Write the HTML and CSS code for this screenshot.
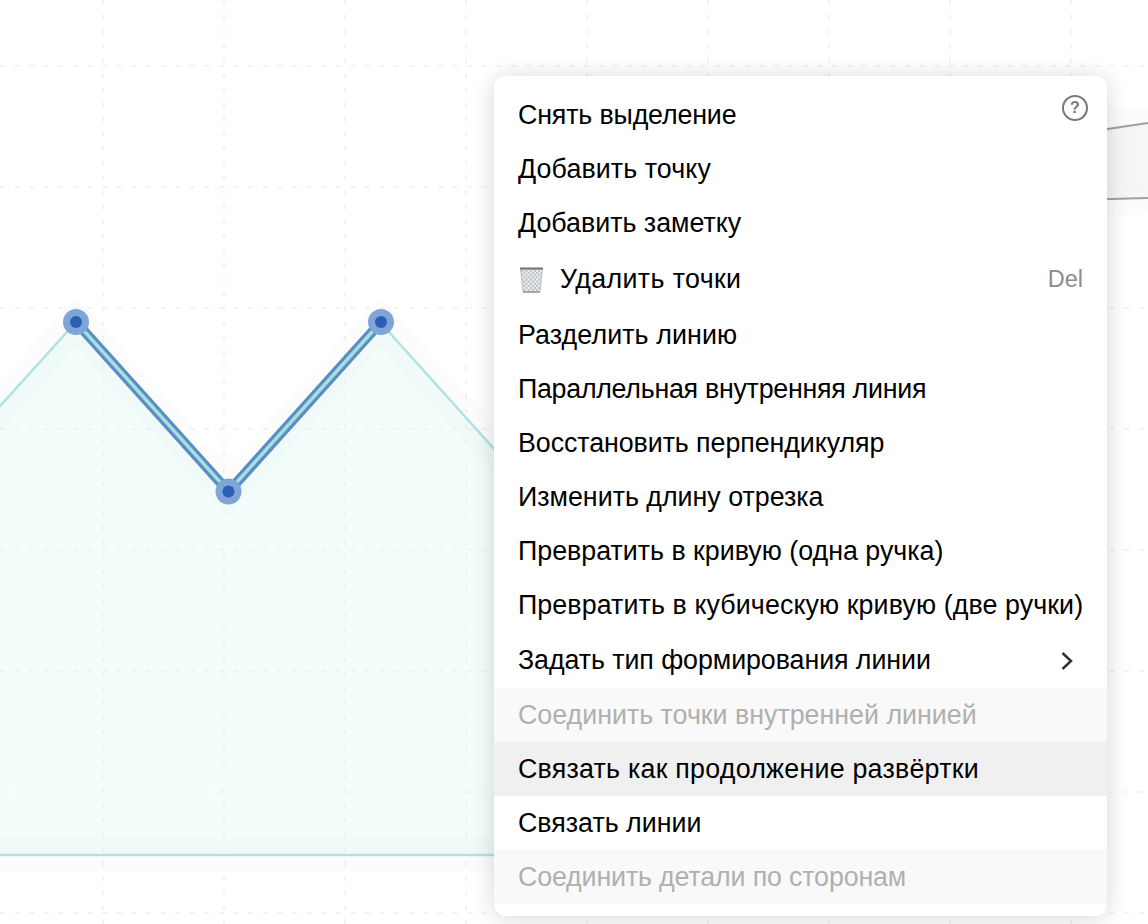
FILE: index.html
```html
<!DOCTYPE html>
<html>
  <head>
    <meta charset="utf-8" />
    <title>Редактор лекал</title>
    <link rel="stylesheet" href="styles.css">
  </head>

  <body>
    <section class="canvas">
      <svg class="drawing" width="1148" height="924" viewBox="0 0 1148 924">
        <defs>
          <pattern id="mesh" width="3" height="3" patternUnits="userSpaceOnUse" patternTransform="rotate(45)">
            <rect width="3" height="3" fill="#eef0f1" />
            <path d="M0 0H3M0 0V3" stroke="#9da2a6" stroke-width="1" />
          </pattern>
        </defs>

        <!-- neighbour piece, right side -->
        <path class="piece-halo" d="M950 122L1148 106V214L950 222Z" />
        <path class="piece-fill" d="M950 152L1148 123V198L950 206Z" />
        <path class="piece-line" d="M1000 145L1148 123M1000 202L1148 198" />

        <!-- main piece -->
        <path class="shape-fill" d="M-100 517L76 322L228 491L380 322L620 589V855H-100Z" />

        <!-- grid -->
        <path class="grid" d="M103 0V924M224 0V924M345 0V924M466 0V924M587 0V924M708 0V924M829 0V924M950 0V924M1071 0V924" />
        <path class="grid" d="M0 66H1148M0 187H1148M0 308H1148M0 429H1148M0 550H1148M0 671H1148M0 792H1148M0 913H1148" />

        <path class="shape-halo" d="M-100 517L76 322L228 491L380 322L620 589V855H-100" />
        <path class="shape-line" d="M-100 517L76 322L228 491L380 322L620 589V855H-100" />

        <!-- selected segments -->
        <path class="selected-outer" d="M76 322L228.500 491.500L381 322" />
        <path class="selected-inner" d="M76 322L228.500 491.500L381 322" />

        <g class="point"><circle class="point-ring" cx="76" cy="322" r="13" /><circle class="point-dot" cx="76" cy="322" r="6" /></g>
        <g class="point"><circle class="point-ring" cx="228.500" cy="491.500" r="13" /><circle class="point-dot" cx="228.500" cy="491.500" r="6" /></g>
        <g class="point"><circle class="point-ring" cx="381" cy="322" r="13" /><circle class="point-dot" cx="381" cy="322" r="6" /></g>
      </svg>

      <nav class="menu">
        <span class="help"><span class="help-mark">?</span></span>
        <div class="row snug">Снять выделение</div>
        <div class="row nudge">Добавить точку</div>
        <div class="row">Добавить заметку</div>
        <div class="row row-icon">
          <svg class="trash" width="27" height="28" viewBox="0 0 27 28">
            <path d="M2.500 2.500H24.500L22 26.500H5Z" fill="url(#mesh)" stroke="#b4b8bb" stroke-width="0.800" />
            <path d="M5 25H22L21.800 27H5.200Z" fill="#a6aaae" />
            <path d="M2 2.500H25" stroke="#6d7277" stroke-width="2" />
          </svg>
          <span class="label wide">Удалить точки</span>
          <span class="shortcut">Del</span>
        </div>
        <div class="row nudge">Разделить линию</div>
        <div class="row tight">Параллельная внутренняя линия</div>
        <div class="row fine">Восстановить перпендикуляр</div>
        <div class="row">Изменить длину отрезка</div>
        <div class="row">Превратить в кривую (одна ручка)</div>
        <div class="row nudge">Превратить в кубическую кривую (две ручки)</div>
        <div class="row row-sub fine">
          <span class="label">Задать тип формирования линии</span>
          <svg class="chevron" width="14" height="20" viewBox="0 0 14 20">
            <path d="M2.500 2L11 10L2.500 18" fill="none" stroke="#333" stroke-width="2.500" />
          </svg>
        </div>
        <div class="row disabled">Соединить точки внутренней линией</div>
        <div class="row active loose">Связать как продолжение развёртки</div>
        <div class="row">Связать линии</div>
        <div class="row disabled snug">Соединить детали по сторонам</div>
      </nav>
    </section>
  </body>
</html>
```

FILE: styles.css
```css
/* ------------------------------ reset ------------------------------ */
* {
  margin: 0;
  padding: 0;
  box-sizing: border-box;
}

body {
  background: #fff;
  overflow: hidden;
  font-family: "Liberation Sans", Arial, sans-serif;
}

/* ------------------------------ canvas ------------------------------ */
.canvas {
  position: relative;
  width: 1148px;
  height: 924px;
  overflow: hidden;
}

.drawing {
  position: absolute;
  left: 0;
  top: 0;
}

.grid {
  fill: none;
  stroke: #f0f0f0;
  stroke-width: 1.5;
  stroke-dasharray: 5 9.6;
}

.shape-fill {
  fill: #f3fdfc;
  stroke: none;
}

.shape-halo {
  fill: none;
  stroke: rgba(0, 0, 0, 0.012);
  stroke-width: 34;
}

.shape-line {
  fill: none;
  stroke: #aee3e1;
  stroke-width: 2.5;
}

.selected-outer {
  fill: none;
  stroke: #5a8cc6;
  stroke-width: 10;
}

.selected-inner {
  fill: none;
  stroke: #a8dedd;
  stroke-width: 3.5;
}

.point-ring {
  fill: #7fa4d8;
}

.point-dot {
  fill: #2a5fb5;
}

.piece-fill {
  fill: #f6f6f5;
}

.piece-halo {
  fill: #fcfcfc;
}

.piece-line {
  fill: none;
  stroke: #a0a0a0;
  stroke-width: 2;
}

/* ------------------------------ menu ------------------------------ */
.menu {
  position: absolute;
  left: 494px;
  top: 76px;
  width: 613px;
  height: 840px;
  padding: 12px 0;
  border-radius: 12px;
  background: rgba(255, 255, 255, 0.99);
  box-shadow: 0 2px 24px rgba(0, 0, 0, 0.16);
  color: #000;
  font-size: 26.8px;
}

.row {
  display: flex;
  align-items: center;
  height: 54px;
  padding: 1px 24px 0;
  white-space: nowrap;
}

.row-icon {
  height: 58px;
}

.row-sub {
  height: 56px;
}

.label {
  flex: 1;
}

/* Helvetica and Liberation differ a little per word, these even it out */
.tight {
  letter-spacing: -0.27px;
}

.snug {
  letter-spacing: -0.15px;
}

.fine {
  letter-spacing: -0.07px;
}

.nudge {
  letter-spacing: 0.1px;
}

.loose {
  letter-spacing: 0.24px;
}

.wide {
  letter-spacing: 0.36px;
}

.trash {
  flex: none;
  margin-right: 15px;
}

.shortcut {
  color: #8c8c8c;
  font-size: 23.5px;
}

.chevron {
  flex: none;
  margin-right: 9px;
}

.disabled {
  background: #f9f9f9;
  color: #b0b0b0;
}

.active {
  background: #f0f0f0;
}

.help {
  position: absolute;
  right: 19px;
  top: 19px;
  width: 26px;
  height: 26px;
  display: flex;
  align-items: center;
  justify-content: center;
  border: 2.5px solid #77787c;
  border-radius: 50%;
}

.help-mark {
  color: #77787c;
  font-size: 16px;
  font-weight: bold;
  line-height: 1;
}
```
